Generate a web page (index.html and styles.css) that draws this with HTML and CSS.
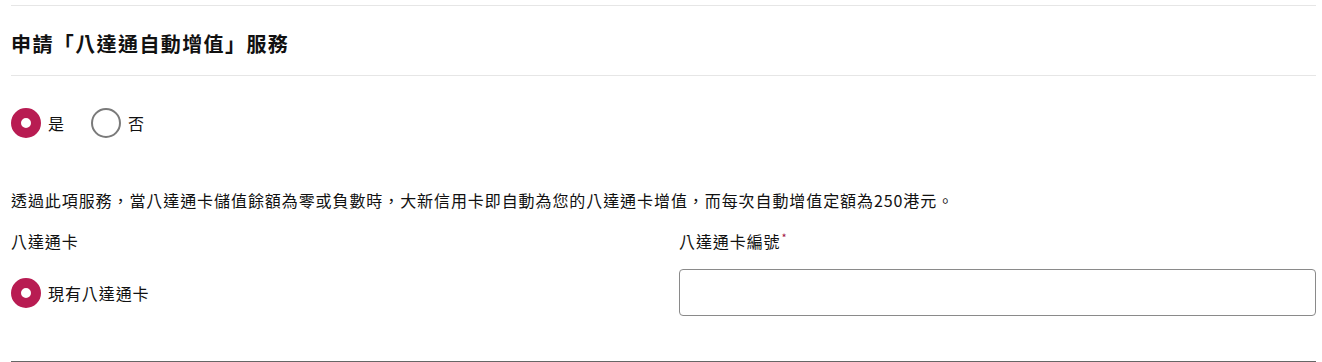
FILE: index.html
```html
<!DOCTYPE html>
<html lang="zh-Hant">
<head>
<meta charset="utf-8">
<link rel="stylesheet" href="styles.css">
</head>
<body>
<div class="wrap">
  <h2 class="title">申請「八達通自動增值」服務</h2>
  <div class="radios">
    <label class="radio"><span class="dot on"></span><span>是</span></label>
    <label class="radio"><span class="dot"></span><span>否</span></label>
  </div>
  <p class="desc">透過此項服務，當八達通卡儲值餘額為零或負數時，大新信用卡即自動為您的八達通卡增值，而每次自動增值定額為250港元。</p>
  <div class="grid">
    <div class="col">
      <div class="label">八達通卡</div>
      <div class="field">
        <label class="radio"><span class="dot on"></span><span>現有八達通卡</span></label>
      </div>
    </div>
    <div class="col">
      <div class="label">八達通卡編號<span class="req">*</span></div>
      <div class="field"><input class="input" type="text"></div>
    </div>
  </div>
  <div class="bottom"></div>
</div>
</body>
</html>
```

FILE: styles.css
```css
html, body {
  margin: 0;
  padding: 0;
  background: #fff;
}
body {
  font-family: "Noto Sans CJK TC", "Noto Sans", sans-serif;
  color: #111;
  font-size: 16px;
  letter-spacing: 0.92px;
}
.wrap {
  width: 1305px;
  margin-left: 11px;
  padding-top: 5px;
}
.title {
  margin: 0;
  border-top: 1px solid #e6e6e6;
  border-bottom: 1px solid #e6e6e6;
  font-size: 20px;
  font-weight: 700;
  line-height: 30px;
  letter-spacing: 1.4px;
  padding: 23px 0 16px;
  color: #111;
}
.radios {
  display: flex;
  gap: 26px;
  margin-top: 32px;
  height: 30px;
}
.radio {
  display: flex;
  align-items: center;
  gap: 7px;
  line-height: 30px;
  font-size: 16px;
}
.dot {
  width: 30px;
  height: 30px;
  box-sizing: border-box;
  border-radius: 50%;
  border: 2px solid #7a7a7a;
  background: #fff;
  display: inline-block;
}
.dot.on {
  border: 10px solid #b81c52;
  background: #fff;
}
.desc {
  margin: 50px 0 0;
  line-height: 24px;
}
.grid {
  display: grid;
  grid-template-columns: 1fr 1fr;
  column-gap: 31px;
  margin-top: 17px;
}
.label {
  line-height: 24px;
}
.req {
  color: #a0123f;
  font-size: 11px;
  vertical-align: top;
  line-height: 16px;
  margin-left: 1px;
}
.field {
  margin-top: 16px;
  height: 47px;
  display: flex;
  align-items: center;
}
.input {
  width: 100%;
  height: 47px;
  box-sizing: border-box;
  border: 1px solid #8a8a8a;
  border-radius: 4px;
  padding: 0 12px;
  font: inherit;
  outline: none;
}
.bottom {
  margin-top: 45px;
  border-top: 2px solid #666;
}
```
